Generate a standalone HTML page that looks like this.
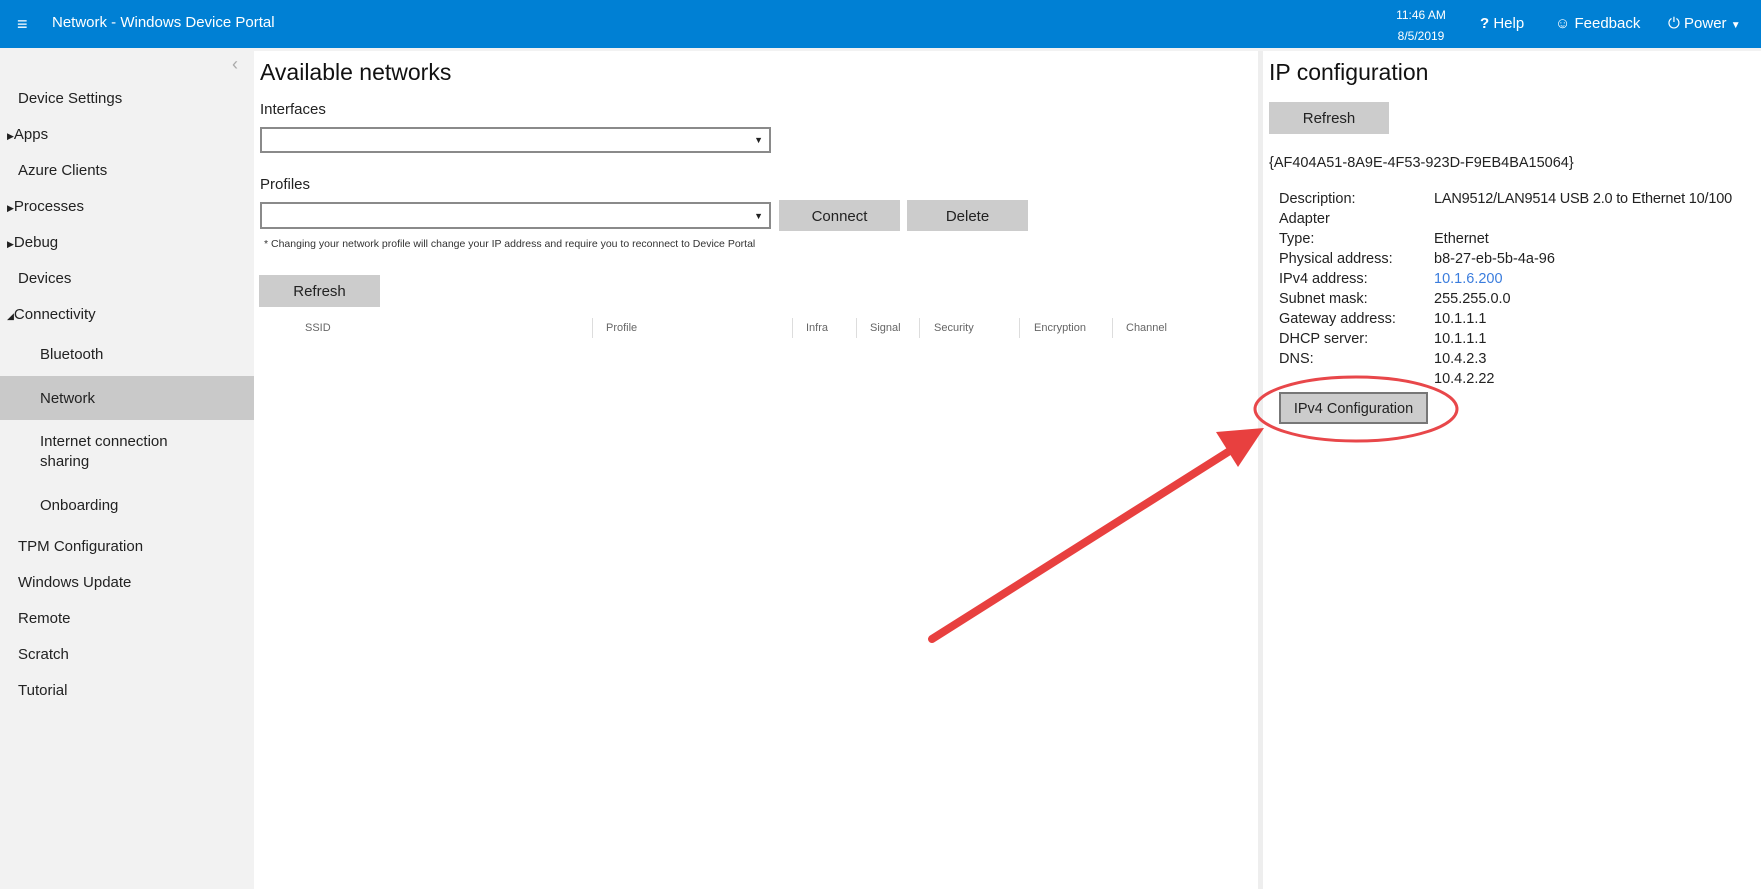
<!DOCTYPE html>
<html><head><meta charset="utf-8"><style>
*{margin:0;padding:0;box-sizing:border-box}
body{width:1761px;height:889px;overflow:hidden;background:#f2f2f2;font-family:"Segoe UI","Liberation Sans",sans-serif;color:#222;position:relative}
.a{position:absolute;white-space:nowrap}
#hdr{position:absolute;left:0;top:0;width:1761px;height:48px;background:#0080d4;color:#fff}
#side{position:absolute;left:0;top:48px;width:254px;height:841px;background:#f2f2f2}
#main{position:absolute;left:254px;top:51px;width:1004px;height:838px;background:#fff}
#right{position:absolute;left:1263px;top:51px;width:498px;height:838px;background:#fff}
.si{font-size:15px;color:#222}
.btn{position:absolute;background:#cccccc;font-size:15px;text-align:center;color:#222}
.sel{position:absolute;border:2px solid #8a8a8a;background:#fff}
.th{font-size:11px;color:#666}
.sep{position:absolute;width:1px;height:20px;background:#ddd;top:318px}
.lb,.vl{font-size:14.5px;color:#222}
</style></head><body>
<div id="hdr">
 <div class="a" style="left:17px;top:14px;font-size:18px">&#8801;</div>
 <div class="a" style="left:52px;top:14px;font-size:15px">Network - Windows Device Portal</div>
 <div class="a" style="left:1393px;top:8px;font-size:12px;text-align:center;width:56px">11:46 AM</div>
 <div class="a" style="left:1393px;top:29px;font-size:12px;text-align:center;width:56px">8/5/2019</div>
 <div class="a" style="left:1480px;top:15px;font-size:15px"><b>?</b> Help</div>
 <div class="a" style="left:1555px;top:15px;font-size:15px">&#9786; Feedback</div>
 <div class="a" style="left:1668px;top:15px;font-size:15px">&#x23FB; Power <span style="font-size:10px">&#9660;</span></div>
</div>
<div id="side">
 <div class="a" style="left:232px;top:6px;color:#aaa;font-size:18px">&#8249;</div>
 <div class="a si" style="left:18px;top:42px">Device Settings</div>
 <div class="a si" style="left:7px;top:78px"><span style="font-size:9px">&#9654;</span>Apps</div>
 <div class="a si" style="left:18px;top:114px">Azure Clients</div>
 <div class="a si" style="left:7px;top:150px"><span style="font-size:9px">&#9654;</span>Processes</div>
 <div class="a si" style="left:7px;top:186px"><span style="font-size:9px">&#9654;</span>Debug</div>
 <div class="a si" style="left:18px;top:222px">Devices</div>
 <div class="a si" style="left:7px;top:258px"><span style="font-size:9px">&#9698;</span>Connectivity</div>
 <div class="a si" style="left:40px;top:298px">Bluetooth</div>
 <div class="a" style="left:0;top:328px;width:254px;height:44px;background:#c9c9c9"></div>
 <div class="a si" style="left:40px;top:342px">Network</div>
 <div class="a si" style="left:40px;top:385px">Internet connection</div>
 <div class="a si" style="left:40px;top:405px">sharing</div>
 <div class="a si" style="left:40px;top:449px">Onboarding</div>
 <div class="a si" style="left:18px;top:490px">TPM Configuration</div>
 <div class="a si" style="left:18px;top:526px">Windows Update</div>
 <div class="a si" style="left:18px;top:562px">Remote</div>
 <div class="a si" style="left:18px;top:598px">Scratch</div>
 <div class="a si" style="left:18px;top:634px">Tutorial</div>
</div>
<div id="main"></div>
<div class="a" style="left:1258px;top:51px;width:5px;height:838px;background:#eee"></div>
<div id="right"></div>
<div class="a" style="left:260px;top:59px;font-size:23px;color:#111">Available networks</div>
<div class="a" style="left:260px;top:101px;font-size:15px">Interfaces</div>
<div class="sel" style="left:260px;top:127px;width:511px;height:26px"><span class="a" style="right:6px;top:6px;font-size:9px">&#9660;</span></div>
<div class="a" style="left:260px;top:176px;font-size:15px">Profiles</div>
<div class="sel" style="left:260px;top:202px;width:511px;height:27px"><span class="a" style="right:6px;top:7px;font-size:9px">&#9660;</span></div>
<div class="btn" style="left:779px;top:200px;width:121px;height:31px;line-height:33px">Connect</div>
<div class="btn" style="left:907px;top:200px;width:121px;height:31px;line-height:33px">Delete</div>
<div class="a" style="left:264px;top:238px;font-size:10.5px;color:#333">* Changing your network profile will change your IP address and require you to reconnect to Device Portal</div>
<div class="btn" style="left:259px;top:275px;width:121px;height:32px;line-height:34px">Refresh</div>
<div class="a th" style="left:305px;top:322px">SSID</div>
<div class="a th" style="left:606px;top:322px">Profile</div>
<div class="a th" style="left:806px;top:322px">Infra</div>
<div class="a th" style="left:870px;top:322px">Signal</div>
<div class="a th" style="left:934px;top:322px">Security</div>
<div class="a th" style="left:1034px;top:322px">Encryption</div>
<div class="a th" style="left:1126px;top:322px">Channel</div>
<div class="sep" style="left:592px"></div><div class="sep" style="left:792px"></div><div class="sep" style="left:856px"></div><div class="sep" style="left:919px"></div><div class="sep" style="left:1019px"></div><div class="sep" style="left:1112px"></div>

<div class="a" style="left:1269px;top:59px;font-size:23px;color:#111">IP configuration</div>
<div class="btn" style="left:1269px;top:102px;width:120px;height:32px;line-height:34px">Refresh</div>
<div class="a" style="left:1269px;top:155px;font-size:14.5px">{AF404A51-8A9E-4F53-923D-F9EB4BA15064}</div>
<div class="a lb" style="left:1279px;top:191px">Description:</div><div class="a vl" style="left:1434px;top:191px;letter-spacing:-0.2px">LAN9512/LAN9514 USB 2.0 to Ethernet 10/100</div>
<div class="a lb" style="left:1279px;top:211px">Adapter</div>
<div class="a lb" style="left:1279px;top:231px">Type:</div><div class="a vl" style="left:1434px;top:231px">Ethernet</div>
<div class="a lb" style="left:1279px;top:251px">Physical address:</div><div class="a vl" style="left:1434px;top:251px">b8-27-eb-5b-4a-96</div>
<div class="a lb" style="left:1279px;top:271px">IPv4 address:</div><div class="a vl" style="left:1434px;top:271px;color:#3b7ddd">10.1.6.200</div>
<div class="a lb" style="left:1279px;top:291px">Subnet mask:</div><div class="a vl" style="left:1434px;top:291px">255.255.0.0</div>
<div class="a lb" style="left:1279px;top:311px">Gateway address:</div><div class="a vl" style="left:1434px;top:311px">10.1.1.1</div>
<div class="a lb" style="left:1279px;top:331px">DHCP server:</div><div class="a vl" style="left:1434px;top:331px">10.1.1.1</div>
<div class="a lb" style="left:1279px;top:351px">DNS:</div><div class="a vl" style="left:1434px;top:351px">10.4.2.3</div>
<div class="a vl" style="left:1434px;top:371px">10.4.2.22</div>
<div class="btn" style="left:1279px;top:392px;width:149px;height:32px;line-height:30px;border:2px solid #777;font-size:14.5px">IPv4 Configuration</div>
<svg class="a" style="left:0;top:0" width="1761" height="889">
 <ellipse cx="1356" cy="409" rx="101" ry="32" fill="none" stroke="#e8474a" stroke-width="3"/>
 <line x1="932" y1="639" x2="1228" y2="452" stroke="#e8403f" stroke-width="8" stroke-linecap="round"/>
 <polygon points="1264,428 1216,432 1238,467" fill="#e8403f"/>
</svg>
</body></html>
